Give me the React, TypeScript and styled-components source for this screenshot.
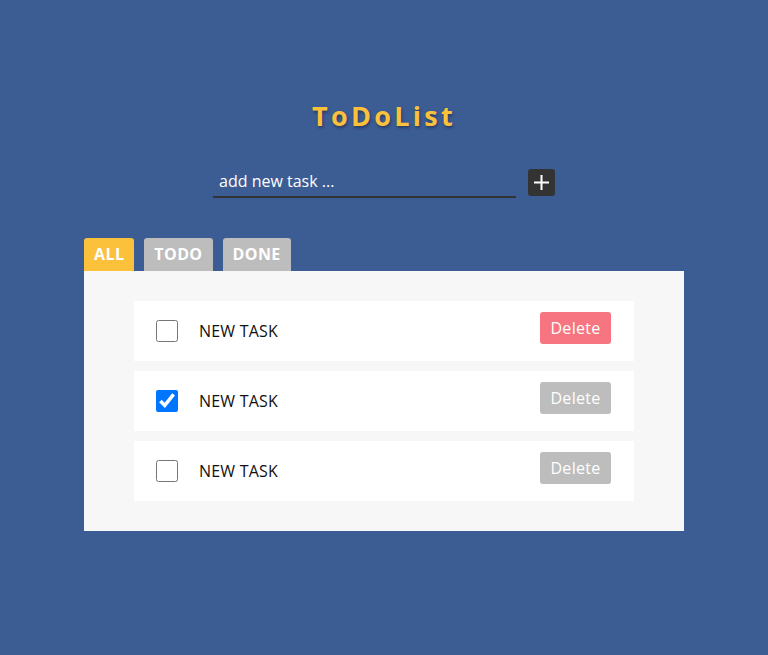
import React, { useState } from "react";
import styled, { createGlobalStyle } from "styled-components";

const Global = createGlobalStyle`
  html, body { margin: 0; padding: 0; background: #3c5c94; }
  body { font-family: "Open Sans", "Noto Sans", sans-serif; }
`;

const Page = styled.div`
  width: 768px;
  min-height: 655px;
  background: #3c5c94;
  display: flex;
  flex-direction: column;
  align-items: center;
  padding-top: 98px;
  box-sizing: border-box;
`;

const Title = styled.h1`
  margin: 0;
  font-size: 27px;
  line-height: 36px;
  font-weight: 700;
  letter-spacing: 3.3px;
  color: #fbc13a;
  text-shadow: 1px 2px 3px rgba(0, 0, 0, 0.35);
`;

const AddRow = styled.div`
  display: flex;
  align-items: center;
  gap: 12px;
  margin-top: 32px;
`;

const TaskInput = styled.input`
  width: 303px;
  height: 29px;
  box-sizing: border-box;
  border: none;
  border-bottom: 2px solid #333;
  background: transparent;
  color: #fff;
  font-family: "Open Sans", sans-serif;
  font-size: 16px;
  padding: 0 6px 3px;
  outline: none;
  margin-top: 3px;
  &::placeholder { color: #fff; opacity: 1; }
`;

const AddButton = styled.button`
  width: 27px;
  height: 27px;
  border: none;
  border-radius: 3px;
  background: #333;
  padding: 0;
  display: flex;
  align-items: center;
  justify-content: center;
`;

const Board = styled.div`
  width: 600px;
  margin-top: 40px;
  display: flex;
  flex-direction: column;
`;

const Tabs = styled.div`
  display: flex;
  gap: 10px;
`;

const Tab = styled.button<{ $active?: boolean }>`
  height: 33px;
  padding: 0 10px;
  border: none;
  border-radius: 3px 3px 0 0;
  background: ${(p) => (p.$active ? "#fbc13a" : "#bdbdbd")};
  color: #fff;
  font-family: "Open Sans", sans-serif;
  font-weight: 700;
  font-size: 16px;
  letter-spacing: 0.4px;
  padding-bottom: 2px;
`;

const Panel = styled.div`
  background: #f7f7f7;
  padding: 30px 50px;
  display: flex;
  flex-direction: column;
  gap: 10px;
`;

const Item = styled.div`
  height: 60px;
  background: #fff;
  display: flex;
  align-items: center;
  padding: 0 23px 0 22px;
`;

const Check = styled.input`
  width: 22px;
  height: 22px;
  margin: 0;
`;

const Label = styled.span`
  margin-left: 21px;
  font-size: 16px;
  letter-spacing: 0.2px;
  color: #111;
  flex: 1;
`;

const DeleteButton = styled.button<{ $danger?: boolean }>`
  align-self: flex-start;
  margin-top: 11px;
  width: 71px;
  height: 32px;
  border: none;
  border-radius: 3px;
  background: ${(p) => (p.$danger ? "#f67580" : "#bdbdbd")};
  color: #fff;
  font-family: "Open Sans", sans-serif;
  font-size: 16px;
  letter-spacing: 0.3px;
  padding: 0;
`;

export default function App() {
  const [done, setDone] = useState([false, true, false]);
  return (
    <>
      <Global />
      <Page>
        <Title>ToDoList</Title>
        <AddRow>
          <TaskInput placeholder="add new task ..." />
          <AddButton aria-label="add">
            <svg width="17" height="17" viewBox="0 0 17 17">
              <path d="M8.5 1v15M1 8.5h15" stroke="#fff" strokeWidth="2" />
            </svg>
          </AddButton>
        </AddRow>
        <Board>
          <Tabs>
            <Tab $active>ALL</Tab>
            <Tab>TODO</Tab>
            <Tab>DONE</Tab>
          </Tabs>
          <Panel>
            {done.map((d, i) => (
              <Item key={i}>
                <Check
                  type="checkbox"
                  checked={d}
                  onChange={() =>
                    setDone(done.map((v, j) => (j === i ? !v : v)))
                  }
                />
                <Label>NEW TASK</Label>
                <DeleteButton $danger={i === 0}>Delete</DeleteButton>
              </Item>
            ))}
          </Panel>
        </Board>
      </Page>
    </>
  );
}
